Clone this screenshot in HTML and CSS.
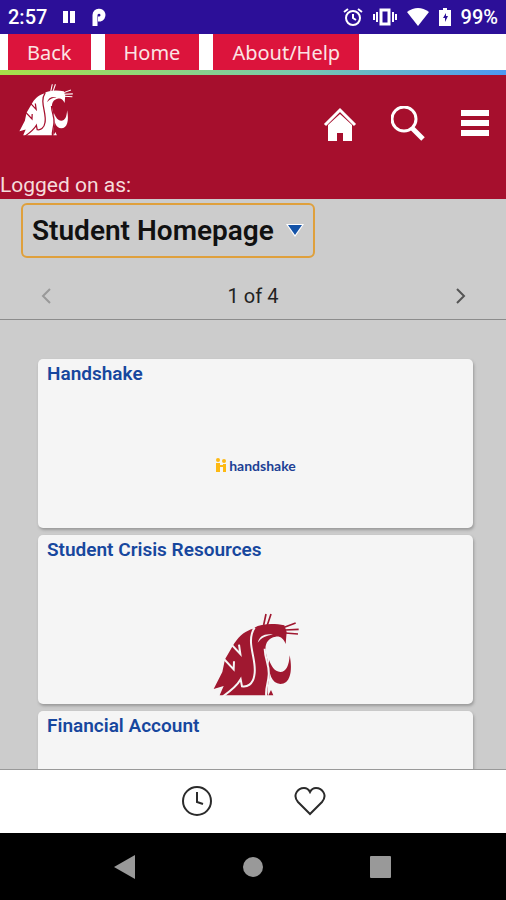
FILE: index.html
```html
<!DOCTYPE html>
<html lang="en">
<head>
    <meta charset="UTF-8">
    <meta name="viewport" content="width=device-width, initial-scale=1.0">
    <title>Student Homepage</title>
    <link rel="stylesheet" href="styles.css">
</head>
<body>
    <svg class="defs" aria-hidden="true">
        <symbol id="cougar" viewBox="8 8 258 250">
            <path fill="currentColor" d="M10 235L36 184L44 146L72 98C88 72 108 60 128 54C150 38 190 38 222 44L229 64L226 100C220 84 210 76 196 78C172 82 163 100 166 122C170 150 180 165 178 192C176 218 168 232 173 254L28 254L40 226Z"/>
            <path fill="currentColor" d="M176 148C174 190 184 218 210 220C238 220 248 186 238 134C236 165 228 184 210 184C192 182 184 168 176 148ZM174 254L182 238L189 254Z"/>
            <path stroke="currentColor" stroke-width="5" d="M160 43L167 10M171 43L182 10M222 50L256 37M224 58L265 56M224 67L263 70"/>
            <path class="cut" d="M133 51C104 94 142 148 132 194C128 221 110 230 95 227L91 206C80 226 58 243 38 257M60 98L90 130L86 102M38 142L70 176L71 152M163 114C164 148 178 164 175 194C174 218 164 234 168 257"/>
            <path class="shine" d="M142 96C148 76 162 68 188 72C168 74 154 80 142 96Z"/>
        </symbol>
    </svg>

    <div class="status-bar">
        <span>2:57</span>
        <svg width="14" height="14" viewBox="0 0 14 14"><path fill="#fff" d="M1 1h5v12H1zM8 1h5v12H8z"/></svg>
        <svg width="16" height="20" viewBox="0 0 16 20"><path fill="none" stroke="#fff" stroke-width="5" d="M4 19V8a4 4 0 1 1 5 4H7"/></svg>
        <div class="status-icons">
            <svg width="20" height="20" viewBox="0 0 20 20" fill="none" stroke="#fff" stroke-width="2"><circle cx="10" cy="11" r="7"/><path d="M10 7v4l3 2M1 5l4-3M19 5l-4-3"/></svg>
            <svg width="24" height="20" viewBox="0 0 24 20" fill="none" stroke="#fff" stroke-width="3"><rect x="8" y="3" width="8" height="14"/><path stroke-width="2" d="M4 5v10M20 5v10M1 7v6M23 7v6"/></svg>
            <svg width="22" height="18" viewBox="0 0 22 18"><path fill="#fff" d="M0 4Q11-4 22 4L11 18z"/></svg>
            <svg width="12" height="20" viewBox="0 0 12 20"><path fill="#fff" d="M4 1h4v2h4v16H0V3h4z"/><path fill="#2c0f98" d="M7 6L4 11h2v4l3-6H7z"/></svg>
            <span>99%</span>
        </div>
    </div>

    <nav class="tabs">
        <button class="tab-btn">Back</button>
        <button class="tab-btn">Home</button>
        <button class="tab-btn">About/Help</button>
    </nav>

    <header class="header">
        <div class="header-row">
            <svg class="header-logo" role="img" aria-label="WSU"><use href="#cougar"/></svg>
            <div class="header-actions">
                <button class="icon-btn" aria-label="Home">
                    <svg width="34" height="36" viewBox="0 0 34 36"><path fill="#fff" d="M5 19L17 8l12 11v16h-9v-8h-6v8H5z"/><path fill="none" stroke="#fff" stroke-width="3" d="M2 19L17 4l15 15"/></svg>
                </button>
                <button class="icon-btn" aria-label="Search">
                    <svg width="36" height="36" viewBox="0 0 36 36" fill="none" stroke="#fff"><circle cx="13" cy="13" r="12" stroke-width="3"/><path stroke-width="5" d="M21 22l11 11"/></svg>
                </button>
                <button class="icon-btn" aria-label="Menu">
                    <svg width="28" height="36" viewBox="0 0 28 36"><path fill="#fff" d="M0 4h28v6H0zM0 14h28v6H0zM0 24h28v6H0z"/></svg>
                </button>
            </div>
        </div>
        <p class="logged-on">Logged on as:</p>
    </header>

    <main class="content">
        <div class="page-select">
            <select class="homepage-select" aria-label="Homepage">
                <option>Student Homepage</option>
            </select>
            <svg class="select-arrow" width="18" height="14" viewBox="0 0 18 14"><path fill="#fff" d="M0 1h18L9 14z"/><path fill="#1453a8" d="M2 2h14L9 12z"/></svg>
        </div>
        <div class="pager">
            <button class="icon-btn" aria-label="Previous" disabled>
                <svg width="12" height="18" viewBox="0 0 12 18"><path fill="none" stroke="#999" stroke-width="2" d="M10 2L3 9l7 7"/></svg>
            </button>
            <span>1 of 4</span>
            <button class="icon-btn" aria-label="Next">
                <svg width="12" height="18" viewBox="0 0 12 18"><path fill="none" stroke="#555" stroke-width="2" d="M3 2l7 7-7 7"/></svg>
            </button>
        </div>
        <div class="tiles">
            <section class="tile">
                <h2>Handshake</h2>
                <div class="tile-body handshake">
                    <svg width="12" height="14" viewBox="0 0 12 14" fill="#fdb913"><circle cx="3" cy="2" r="2"/><circle cx="9" cy="3" r="2"/><path d="M1 5h4v2h3V6h3v8H8V9H5v5H1z"/></svg>
                    <span>handshake</span>
                </div>
            </section>
            <section class="tile">
                <h2>Student Crisis Resources</h2>
                <div class="tile-body crisis">
                    <svg class="tile-logo" role="img" aria-label="WSU"><use href="#cougar"/></svg>
                </div>
            </section>
            <section class="tile">
                <h2>Financial Account</h2>
            </section>
        </div>
    </main>

    <footer class="footer">
        <button class="icon-btn" aria-label="Recent">
            <svg width="32" height="32" viewBox="0 0 32 32" fill="none" stroke="#2b2b2b" stroke-width="2"><circle cx="16" cy="15" r="14"/><path d="M16 6v10l6 2"/></svg>
        </button>
        <button class="icon-btn" aria-label="Favorites">
            <svg width="32" height="32" viewBox="0 0 32 32" fill="none" stroke="#2b2b2b" stroke-width="2"><path d="M16 28L4 16C-2 9 4 2 10 2q4 0 6 4q2-4 6-4C28 2 34 9 28 16z"/></svg>
        </button>
    </footer>

    <div class="android-nav">
        <button class="icon-btn" aria-label="Back"><svg width="22" height="24" viewBox="0 0 22 24"><path fill="#999" d="M21 0v24L0 12z"/></svg></button>
        <button class="icon-btn" aria-label="Home"><svg width="22" height="24" viewBox="0 0 22 24"><circle fill="#999" cx="11" cy="12" r="10"/></svg></button>
        <button class="icon-btn" aria-label="Overview"><svg width="22" height="24" viewBox="0 0 22 24"><rect fill="#999" y="1" width="21" height="22" rx="1"/></svg></button>
    </div>
</body>
</html>
```

FILE: styles.css
```css
* {
    box-sizing: border-box;
}
body {
    margin: 0;
    height: 100vh;
    display: flex;
    flex-direction: column;
    font-family: Roboto, sans-serif;
    color: #222;
    background: #fff;
}
svg {
    display: block;
    flex-shrink: 0;
}
.defs {
    position: absolute;
    width: 0;
    height: 0;
}
.icon-btn {
    padding: 0;
    border: none;
    background: none;
    cursor: pointer;
}

/* status bar */
.status-bar {
    display: flex;
    align-items: center;
    gap: 15px;
    height: 34px;
    padding: 0 8px;
    flex-shrink: 0;
    background: #2c0f98;
    color: #fff;
    font-size: 20px;
    font-weight: 500;
}
.status-icons {
    display: flex;
    align-items: center;
    gap: 10px;
    margin-left: auto;
}

/* top buttons */
.tabs {
    display: flex;
    gap: 14px;
    padding: 0 8px;
    flex-shrink: 0;
    border-bottom: 5px solid;
    border-image: linear-gradient(to right, #a8e048, #78c8b0 60%, #4c98f4) 1;
}
.tab-btn {
    height: 36px;
    padding: 0 19px;
    border: none;
    background: #dc143c;
    color: #fbe4e4;
    font-family: "Noto Sans", sans-serif;
    font-size: 20px;
    cursor: pointer;
}

/* red header */
.header {
    flex-shrink: 0;
    background: #a60f2d;
    color: #fff;
}
.header-row {
    display: flex;
    justify-content: space-between;
    align-items: flex-start;
    height: 96px;
    padding: 8px 17px 0 19px;
}
.header-logo {
    --cut: #a60f2d;
    width: 54px;
    height: 54px;
}
.header-actions {
    display: flex;
    gap: 34px;
    padding-top: 23px;
}
.cut {
    fill: none;
    stroke: var(--cut);
    stroke-width: 6;
}
.shine {
    fill: var(--cut);
}
.logged-on {
    margin: 0;
    color: #f5dcdc;
    font-size: 21px;
    line-height: 28px;
}

/* homepage content */
.content {
    flex: 1;
    min-height: 0;
    overflow: hidden;
    background: #ccc;
}
.page-select {
    position: relative;
    width: fit-content;
    margin: 4px 0 0 21px;
}
.homepage-select {
    display: block;
    height: 55px;
    padding: 0 39px 0 9px;
    appearance: none;
    border: 2px solid #dfa03c;
    border-radius: 6px;
    background: transparent;
    color: #111;
    font-family: Roboto, sans-serif;
    font-size: 28px;
    font-weight: 600;
}
.select-arrow {
    position: absolute;
    right: 11px;
    top: 20px;
    pointer-events: none;
}
.pager {
    display: flex;
    justify-content: space-between;
    align-items: center;
    height: 62px;
    padding: 14px 40px 0;
    border-bottom: 1px solid #8c8c8c;
    font-size: 20px;
}
.tiles {
    display: flex;
    flex-direction: column;
    gap: 7px;
    padding: 39px 33px 0 38px;
}
.tile {
    display: flex;
    flex-direction: column;
    height: 169px;
    padding: 4px 9px 7px;
    flex-shrink: 0;
    border-radius: 5px;
    background: #f5f5f5;
    box-shadow: 1px 2px 3px #999;
}
.tile h2 {
    margin: 0;
    color: #17479e;
    font-size: 19px;
    font-weight: 600;
    line-height: 22px;
}
.tile-body {
    display: flex;
    flex: 1;
    justify-content: center;
    align-items: center;
}
.handshake {
    gap: 2px;
    padding-top: 24px;
    color: #1d3f94;
    font-family: Lato, sans-serif;
    font-size: 14px;
    font-weight: 700;
}
.crisis {
    align-items: flex-end;
}
.tile-logo {
    --cut: #f5f5f5;
    width: 86px;
    height: 84px;
    color: #a01830;
}

/* bottom bars */
.footer {
    display: flex;
    justify-content: center;
    align-items: center;
    gap: 81px;
    height: 64px;
    flex-shrink: 0;
    border-top: 1px solid #999;
    background: #fff;
}
.android-nav {
    display: flex;
    justify-content: center;
    align-items: center;
    gap: 106px;
    height: 67px;
    flex-shrink: 0;
    background: #000;
}
```
